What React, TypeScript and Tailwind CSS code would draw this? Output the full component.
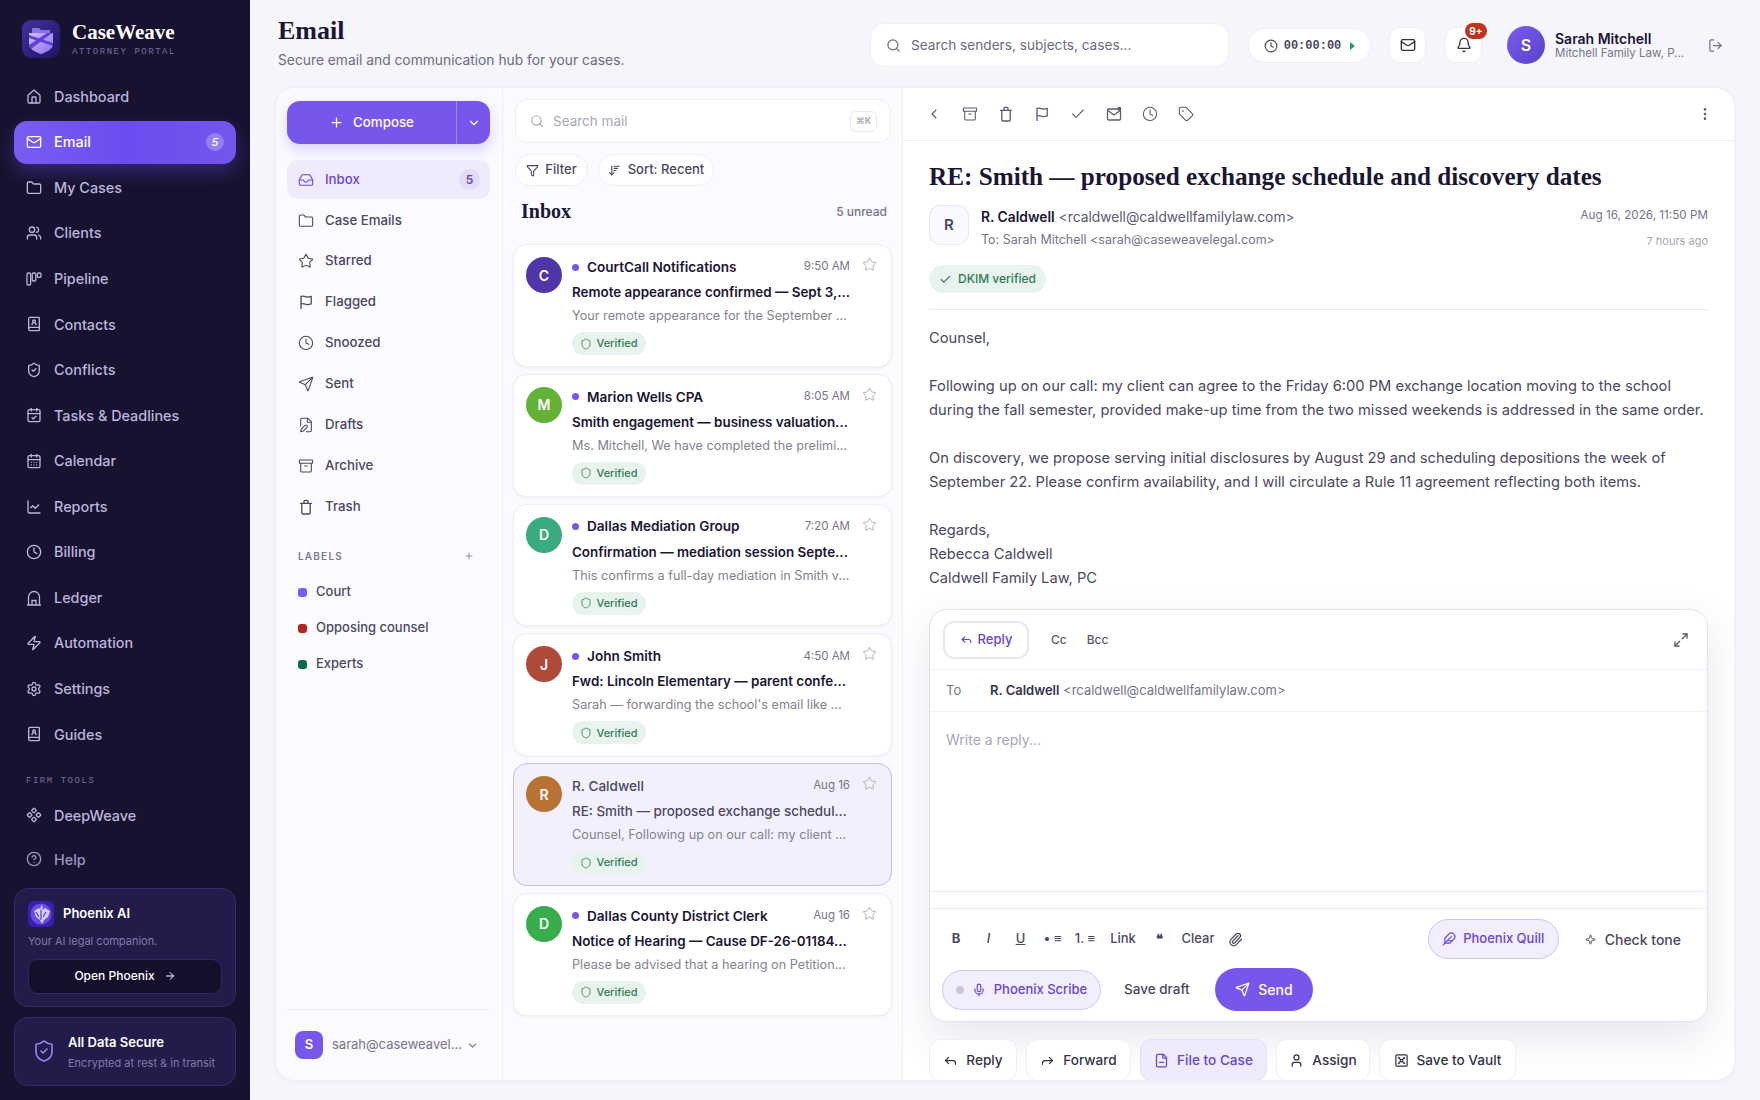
import type { ReactNode } from 'react';
import {
    Archive, ArrowRight, Bell, BookUser, CalendarCheck, CalendarDays, Check, ChartLine, ChevronDown, ChevronLeft,
    CircleHelp, Clock, Component, EllipsisVertical, Feather, FilePen, FileMinus, Filter, Folder, House, Inbox, LogOut, Mail,
    Maximize2, Mic, Paperclip, Plus, Reply, Forward, Search, Send, Settings, Shield, ShieldCheck, Sparkle,
    Star, Tag, User, Users, Zap, ArrowDownWideNarrow, Vault,
} from 'lucide-react';

const Pipeline = () => (
    <svg width="16" height="16" viewBox="0 0 16 16" fill="none" stroke="currentColor" strokeWidth="1.3">
        <rect x="1" y="2" width="3.6" height="12" rx="1.2" />
        <rect x="6.2" y="2" width="3.6" height="8" rx="1.2" />
        <rect x="11.4" y="2" width="3.6" height="4.4" rx="1.2" />
    </svg>
);

const Ledger = () => (
    <svg width="16" height="16" viewBox="0 0 16 16" fill="none" stroke="currentColor" strokeWidth="1.3">
        <path d="M1 15h14M2.500 15V7a5.500 5.500 0 0 1 11 0v8M6 15v-4.500h4V15" />
    </svg>
);

const FlagIcon = ({ size = 16 }: { size?: number }) => (
    <svg width={size} height={size} viewBox="0 0 16 16" fill="none" stroke="currentColor" strokeWidth="1.3" strokeLinejoin="round">
        <path d="M3 15V2.300c2.800-.9 4.200.5 5.800.7 1.500.2 2.900-.2 4.400-.7v7.600c-1.500.5-2.900.9-4.400.7-1.600-.2-3-1.500-5.800-.7" />
    </svg>
);

const TrashIcon = ({ size = 16 }: { size?: number }) => (
    <svg width={size} height={size} viewBox="0 0 16 16" fill="none" stroke="currentColor" strokeWidth="1.3" strokeLinecap="round">
        <path d="M2.500 4.300h11M3.800 4.300V14a1 1 0 0 0 1 1h6.400a1 1 0 0 0 1-1V4.300M6 4.300V2.300a1 1 0 0 1 1-1h2a1 1 0 0 1 1 1v2" />
    </svg>
);

const UnreadMailIcon = () => (
    <svg width="16" height="16" viewBox="0 0 16 16" fill="none" stroke="currentColor" strokeWidth="1.3">
        <rect x="1.500" y="3" width="13" height="11" rx="1.300" />
        <path d="M1.800 4.500 8 9l6.200-4.500" />
        <circle cx="13.300" cy="2.800" r="2" fill="currentColor" stroke="none" />
    </svg>
);

const Logo = () => (
    <svg width="38" height="38" viewBox="0 0 38 38">
        <defs>
            <linearGradient id="lg" x1="0" y1="0" x2="1" y2="1">
                <stop offset="0" stopColor="#43309f" />
                <stop offset="1" stopColor="#1e1462" />
            </linearGradient>
            <linearGradient id="ls" x1="0" y1="0" x2="1" y2="1">
                <stop offset="0" stopColor="#cbbcfa" />
                <stop offset="1" stopColor="#8f6ff0" />
            </linearGradient>
        </defs>
        <rect width="38" height="38" rx="9" fill="url(#lg)" />
        <path d="M10 8h7l2 2h9v6H10z" fill="#8a72e0" />
        <path d="M7 13h24v11c0 5-6 8-12 10-6-2-12-5-12-10z" fill="url(#ls)" />
        <path d="M7 15l24 8v3L7 18zM7 25l18-12h5L9 29z" fill="#6140d2" />
    </svg>
);

const PhoenixLogo = () => (
    <svg width="26" height="26" viewBox="0 0 26 26">
        <rect width="26" height="26" rx="6" fill="#3b1fb0" />
        <circle cx="13" cy="13" r="10.500" fill="#6a4be0" />
        <path d="M13 4c2 1 2 3 1 5l3-2 5 3-2 6-4 3-2 4-2-4-4-3-2-6 5-3 2 2c-1-2-1-4 2-5z" fill="#d8cdfb" />
        <path d="M13 9v10M8 11l3 5M18 11l-3 5" stroke="#5a3bd0" strokeWidth="1.200" />
    </svg>
);

const mainNav: { label: string; icon: ReactNode; badge?: string; active?: boolean }[] = [
    { label: 'Dashboard', icon: <House size={16} /> },
    { label: 'Email', icon: <Mail size={16} />, badge: '5', active: true },
    { label: 'My Cases', icon: <Folder size={16} /> },
    { label: 'Clients', icon: <Users size={16} /> },
    { label: 'Pipeline', icon: <Pipeline /> },
    { label: 'Contacts', icon: <BookUser size={16} /> },
    { label: 'Conflicts', icon: <ShieldCheck size={16} /> },
    { label: 'Tasks & Deadlines', icon: <CalendarCheck size={16} /> },
    { label: 'Calendar', icon: <CalendarDays size={16} /> },
    { label: 'Reports', icon: <ChartLine size={16} /> },
    { label: 'Billing', icon: <Clock size={16} /> },
    { label: 'Ledger', icon: <Ledger /> },
    { label: 'Automation', icon: <Zap size={16} /> },
    { label: 'Settings', icon: <Settings size={16} /> },
    { label: 'Guides', icon: <BookUser size={16} /> },
];

const folders: { label: string; icon: ReactNode }[] = [
    { label: 'Case Emails', icon: <Folder size={16} strokeWidth={1.6} /> },
    { label: 'Starred', icon: <Star size={16} strokeWidth={1.6} /> },
    { label: 'Flagged', icon: <FlagIcon /> },
    { label: 'Snoozed', icon: <Clock size={16} strokeWidth={1.6} /> },
    { label: 'Sent', icon: <Send size={16} strokeWidth={1.6} /> },
    { label: 'Drafts', icon: <FilePen size={16} strokeWidth={1.6} /> },
    { label: 'Archive', icon: <Archive size={16} strokeWidth={1.6} /> },
    { label: 'Trash', icon: <TrashIcon /> },
];

const labels = [
    { name: 'Court', color: 'bg-[#7a5af0]' },
    { name: 'Opposing counsel', color: 'bg-[#b3261e]' },
    { name: 'Experts', color: 'bg-[#0f6b4f]' },
];

const messages = [
    { initial: 'C', color: 'bg-[#4f35a8]', sender: 'CourtCall Notifications', time: '9:50 AM', subject: 'Remote appearance confirmed — Sept 3,...', preview: 'Your remote appearance for the September ...', unread: true },
    { initial: 'M', color: 'bg-[#63b135]', sender: 'Marion Wells CPA', time: '8:05 AM', subject: 'Smith engagement — business valuation...', preview: 'Ms. Mitchell, We have completed the prelimi...', unread: true },
    { initial: 'D', color: 'bg-[#38ab80]', sender: 'Dallas Mediation Group', time: '7:20 AM', subject: 'Confirmation — mediation session Septe...', preview: 'This confirms a full-day mediation in Smith v...', unread: true },
    { initial: 'J', color: 'bg-[#b04a39]', sender: 'John Smith', time: '4:50 AM', subject: 'Fwd: Lincoln Elementary — parent confe...', preview: "Sarah — forwarding the school's email like ...", unread: true },
    { initial: 'R', color: 'bg-[#b87236]', sender: 'R. Caldwell', time: 'Aug 16', subject: 'RE: Smith — proposed exchange schedul...', preview: 'Counsel, Following up on our call: my client ...', unread: false },
    { initial: 'D', color: 'bg-[#38ad4c]', sender: 'Dallas County District Clerk', time: 'Aug 16', subject: 'Notice of Hearing — Cause DF-26-01184...', preview: 'Please be advised that a hearing on Petition...', unread: true },
];

function Sidebar() {
    return (
        <aside className="w-[250px] shrink-0 h-full bg-[#17122f] flex flex-col px-[14px]">
            <div className="flex items-center gap-[12px] pl-[8px] pt-[20px] h-[58px] shrink-0">
                <Logo />
                <div>
                    <div className="font-['Liberation_Serif',serif] font-bold text-[21px] leading-[24px] text-white">CaseWeave</div>
                    <div className="font-['Liberation_Mono',monospace] text-[9px] leading-[12px] mt-[2px] tracking-[0.17em] text-[#786fa3]">ATTORNEY PORTAL</div>
                </div>
            </div>
            <nav className="flex flex-col gap-[2.570px] mt-[17px]">
                {mainNav.map((item) => (
                    <div
                        key={item.label}
                        className={`h-[43px] shrink-0 rounded-[13px] flex items-center gap-[12px] pl-[12px] pr-[12px] text-[14.400px] font-medium ${
                            item.active
                                ? 'bg-gradient-to-r from-[#7a5cf2] via-[#6b4cf0] to-[#7455ec] text-white shadow-[0_8px_18px_rgba(110,80,240,0.35)]'
                                : 'text-[#bdb5de]'
                        }`}
                    >
                        <span className="w-[16px] flex justify-center">{item.icon}</span>
                        <span className="flex-1">{item.label}</span>
                        {item.badge && (
                            <span className="w-[18px] h-[18px] rounded-full bg-white/25 text-[11px] italic flex items-center justify-center">{item.badge}</span>
                        )}
                    </div>
                ))}
            </nav>
            <div className="font-['Liberation_Mono',monospace] text-[9px] leading-[12px] tracking-[0.17em] text-[#786fa3] pl-[12px] mt-[19px]">FIRM TOOLS</div>
            <div className="flex items-center gap-[12px] pl-[12px] h-[43px] mt-[7px] text-[14.400px] font-medium text-[#bdb5de]">
                <Component size={16} />
                <span>DeepWeave</span>
            </div>
            <div className="flex items-center gap-[12px] pl-[12px] h-[43px] mt-[1px] text-[14.400px] font-medium text-[#9d95c2]">
                <CircleHelp size={16} />
                <span>Help</span>
            </div>
            <div className="mt-[7px] h-[119px] shrink-0 rounded-[14px] bg-[#231c4a] border border-[#342b69] px-[13px] pt-[12px]">
                <div className="flex items-center gap-[9px]">
                    <PhoenixLogo />
                    <span className="text-[13px] font-semibold text-white">Phoenix AI</span>
                </div>
                <div className="text-[11px] leading-[14px] text-[#8379ad] mt-[7px]">Your AI legal companion.</div>
                <div className="mt-[11px] h-[35px] rounded-[10px] bg-[#150f2c] border border-[#2f2760] flex items-center justify-center gap-[9px] text-[12px] font-medium text-white">
                    Open Phoenix <ArrowRight size={12} />
                </div>
            </div>
            <div className="mt-[10px] h-[69px] shrink-0 rounded-[14px] bg-[#231c4a] border border-[#342b69] flex items-center pl-[17px] gap-[12px]">
                <ShieldCheck size={24} strokeWidth={1.6} className="text-[#9d86f5]" />
                <div>
                    <div className="text-[13px] font-semibold leading-[18px] text-white">All Data Secure</div>
                    <div className="text-[11px] leading-[14px] mt-[5px] text-[#8379ad]">Encrypted at rest & in transit</div>
                </div>
            </div>
        </aside>
    );
}

function TopBar() {
    return (
        <header className="h-[87px] shrink-0 flex items-start pl-[3px] pt-[23px] pr-[5px]">
            <div className="w-[592px] shrink-0">
                <h1 className="font-['Liberation_Serif',serif] font-bold text-[26px] leading-[16px] text-[#1a1633]">Email</h1>
                <p className="text-[13.800px] leading-[20px] text-[#6d6a80] mt-[11px]">Secure email and communication hub for your cases.</p>
            </div>
            <div className="w-[359px] h-[44px] shrink-0 rounded-[14px] bg-white border border-[#efedf6] flex items-center gap-[10px] pl-[15px] text-[13.650px] text-[#6d6a80]">
                <Search size={15} />
                Search senders, subjects, cases...
            </div>
            <div className="ml-[19px] mt-[5px] w-[123px] h-[35px] rounded-full bg-white border border-[#efedf6] flex items-center justify-center gap-[6px] text-[#4b4860]">
                <Clock size={14} />
                <span className="font-['Liberation_Mono',monospace] text-[12px] font-bold">00:00:00</span>
                <span className="w-0 h-0 border-y-[4px] border-y-transparent border-l-[5px] border-l-[#1e9e6a] ml-[3px]" />
            </div>
            <div className="ml-[18px] mt-[4px] w-[37px] h-[36px] rounded-[11px] bg-white border border-[#efedf6] flex items-center justify-center text-[#35324a]">
                <Mail size={16} />
            </div>
            <div className="relative ml-[19px] mt-[4px] w-[37px] h-[36px] rounded-[11px] bg-white border border-[#efedf6] flex items-center justify-center text-[#35324a]">
                <Bell size={16} />
                <span className="absolute -top-[5px] left-[19px] w-[22px] h-[16px] rounded-full bg-[#c0341d] text-white text-[10px] font-bold flex items-center justify-center">9+</span>
            </div>
            <div className="ml-[25px] mt-[3px] w-[38px] h-[38px] rounded-full bg-gradient-to-br from-[#7b5cf0] to-[#5a40c8] text-white text-[16px] font-semibold flex items-center justify-center">S</div>
            <div className="ml-[10px] mt-[8px] w-[145px]">
                <div className="text-[14px] leading-[15px] font-semibold text-[#1a1633]">Sarah Mitchell</div>
                <div className="text-[11.500px] leading-[14px] text-[#77748a]">Mitchell Family Law, P...</div>
            </div>
            <LogOut size={15} className="ml-[8px] mt-[15px] text-[#77748a]" />
        </header>
    );
}

function FolderColumn() {
    return (
        <div className="w-[227px] shrink-0 border-r border-[#efedf6] bg-[#fbfaff] flex flex-col pl-[11px] pr-[12px] pt-[13px]">
            <div className="flex h-[43px] shrink-0 rounded-[13px] bg-[#7856ec] text-white text-[13.300px] font-medium shadow-[0_6px_14px_rgba(120,86,236,0.25)]">
                <div className="flex-1 flex items-center justify-center gap-[9px] border-r border-white/30">
                    <Plus size={15} /> Compose
                </div>
                <div className="w-[33px] flex items-center justify-center"><ChevronDown size={14} /></div>
            </div>
            <div className="mt-[16px] h-[39px] shrink-0 rounded-[11px] bg-[#efebfc] flex items-center pl-[11px] pr-[10px] gap-[11px] text-[13.250px] font-medium text-[#6a45d0]">
                <Inbox size={16} strokeWidth={1.6} />
                <span className="flex-1">Inbox</span>
                <span className="w-[21px] h-[21px] rounded-full bg-[#e2dcf9] text-[12px] font-semibold flex items-center justify-center">5</span>
            </div>
            <div className="mt-[6px] flex flex-col gap-[9.900px]">
                {folders.map((f) => (
                    <div key={f.label} className="h-[31px] flex items-center pl-[11px] gap-[11px] text-[13.250px] font-medium text-[#4b4860]">
                        {f.icon}
                        {f.label}
                    </div>
                ))}
            </div>
            <div className="mt-[27px] flex items-center justify-between pl-[11px] pr-[16px] text-[10px] leading-[14px] font-semibold tracking-[0.12em] text-[#7d7a90]">
                LABELS <Plus size={10} />
            </div>
            <div className="mt-[16px] flex flex-col gap-[10px]">
                {labels.map((l) => (
                    <div key={l.name} className="h-[26px] flex items-center pl-[11px] gap-[9px] text-[13px] font-medium text-[#4b4860]">
                        <span className={`w-[9px] h-[9px] rounded-[3px] ${l.color}`} />
                        {l.name}
                    </div>
                ))}
            </div>
            <div className="mt-auto border-t border-[#ecebf3] h-[71px] shrink-0 flex items-center pl-[8px] gap-[9px] text-[13px] text-[#77748a]">
                <span className="w-[28px] h-[28px] rounded-[8px] bg-[#7856ec] text-white text-[13px] font-semibold flex items-center justify-center">S</span>
                <span className="w-[125px]">sarah@caseweavel...</span>
                <ChevronDown size={13} />
            </div>
        </div>
    );
}

function MessageCard({ m }: { m: (typeof messages)[number] }) {
    return (
        <div className={`h-[122.750px] shrink-0 rounded-[14px] border flex pl-[12px] pt-[12px] ${
            m.unread ? 'bg-white border-[#efedf6] shadow-[0_1px_3px_rgba(60,50,120,0.07)]' : 'bg-[#f3f0fd] border-[#c5baf0]'
        }`}>
            <div className={`w-[36px] h-[36px] rounded-full ${m.color} text-white text-[14px] font-semibold flex items-center justify-center shrink-0`}>{m.initial}</div>
            <div className="ml-[10px] w-[278px]">
                <div className="flex items-center h-[20px]">
                    {m.unread && <span className="w-[7px] h-[7px] rounded-full bg-[#7856ec] mr-[8px] shrink-0" />}
                    <span className={`flex-1 text-[13.600px] ${m.unread ? 'font-semibold text-[#1a1633]' : 'font-medium text-[#4b4860]'}`}>{m.sender}</span>
                    <span className="text-[11.500px] text-[#77748a]">{m.time}</span>
                </div>
                <div className={`mt-[5px] text-[13.400px] leading-[20px] whitespace-nowrap ${m.unread ? 'font-semibold text-[#1a1633]' : 'font-medium text-[#4b4860]'}`}>{m.subject}</div>
                <div className="mt-[5px] text-[12.700px] leading-[18px] whitespace-nowrap text-[#85828f]">{m.preview}</div>
                <div className="mt-[7px] w-[74px] h-[23px] rounded-full bg-[#e9f3ee] flex items-center justify-center gap-[4px] text-[11px] font-medium text-[#2f7a55]">
                    <Shield size={12} strokeWidth={1.6} /> Verified
                </div>
            </div>
            <Star size={15} strokeWidth={1.4} className="ml-[12px] text-[#a8a5b8] shrink-0" />
        </div>
    );
}

function ListColumn() {
    return (
        <div className="w-[400px] shrink-0 border-r border-[#efedf6] bg-[#fbfaff] flex flex-col pl-[10px] pr-[10px] pt-[11px]">
            <div className="ml-[2px] mr-[1px] h-[44px] shrink-0 rounded-[13px] bg-white border border-[#efedf6] flex items-center pl-[14px] pr-[13px] gap-[9px] text-[13.500px] text-[#a8a5b8]">
                <Search size={14} />
                <span className="flex-1">Search mail</span>
                <span className="w-[27px] h-[21px] rounded-[6px] border border-[#e8e6f0] text-[9px] font-semibold flex items-center justify-center">⌘K</span>
            </div>
            <div className="ml-[2px] mt-[11px] flex gap-[10px] text-[13px] font-medium text-[#4b4860]">
                <div className="h-[32px] w-[73px] rounded-full bg-white border border-[#efedf6] flex items-center justify-center gap-[6px]"><Filter size={13} />Filter</div>
                <div className="h-[32px] w-[116px] rounded-full bg-white border border-[#efedf6] flex items-center justify-center gap-[7px]"><ArrowDownWideNarrow size={13} />Sort: Recent</div>
            </div>
            <div className="ml-[8px] mr-[5px] mt-[13px] flex items-center justify-between">
                <span className="font-['Liberation_Serif',serif] font-bold text-[20px] leading-[24px] text-[#1a1633]">Inbox</span>
                <span className="text-[12px] font-medium text-[#77748a] mt-[2px]">5 unread</span>
            </div>
            <div className="mt-[21px] flex flex-col gap-[7px]">
                {messages.map((m, i) => <MessageCard key={i} m={m} />)}
            </div>
        </div>
    );
}

function ReplyBox() {
    return (
        <div className="mt-[19px] h-[413px] rounded-[18px] border border-[#e3e1ec] bg-white flex flex-col shadow-[0_16px_40px_rgba(60,50,120,0.12)]">
            <div className="h-[60px] shrink-0 border-b border-[#f0eff5] flex items-center pl-[13px] pr-[18px] text-[12px] font-medium text-[#5c596f]">
                <div className="h-[38px] w-[86px] rounded-[11px] border-2 border-[#e9e6f4] flex items-center justify-center gap-[5px] text-[13px] font-medium text-[#6a45d0]">
                    <Reply size={13} /> Reply
                </div>
                <span className="ml-[22px]">Cc</span>
                <span className="ml-[20px] flex-1">Bcc</span>
                <Maximize2 size={16} />
            </div>
            <div className="h-[42px] shrink-0 border-b border-[#f0eff5] flex items-center pl-[16px] text-[13px] text-[#77748a]">
                <span className="w-[44px]">To</span>
                <span className="font-semibold text-[#35324a]">R. Caldwell</span>&nbsp;&lt;rcaldwell@caldwellfamilylaw.com&gt;
            </div>
            <div className="h-[180px] shrink-0 border-b border-[#ecebf3] pl-[16px] pt-[18px] text-[14px] leading-[20px] text-[#a8a5b8]">Write a reply...</div>
            <div className="h-[17px] shrink-0 border-b border-[#ecebf3]" />
            <div className="mt-[10px] h-[40px] shrink-0 flex items-center text-[13px] text-[#4b4860] pl-[10px] pr-[26px]">
                <div className="flex-1 flex items-center font-medium text-center">
                    <span className="w-[32px] font-bold">B</span>
                    <span className="w-[33px] italic">I</span>
                    <span className="w-[31px] underline">U</span>
                    <span className="w-[33px]">• ≡</span>
                    <span className="w-[32px]">1. ≡</span>
                    <span className="w-[44px]">Link</span>
                    <span className="w-[28px] font-bold">❝</span>
                    <span className="w-[50px]">Clear</span>
                    <span className="w-[24px] flex justify-center"><Paperclip size={15} /></span>
                </div>
                <div className="w-[131px] h-[40px] rounded-full bg-[#f2eefd] border border-[#cfc5f3] flex items-center justify-center gap-[7px] font-medium text-[#6a45d0]">
                    <Feather size={14} /> Phoenix Quill
                </div>
                <div className="ml-[26px] flex items-center gap-[9px] text-[14px] font-medium text-[#4b4860]">
                    <Sparkle size={11} /> Check tone
                </div>
            </div>
            <div className="mt-[9px] flex items-center pl-[12px]">
                <div className="w-[159px] h-[40px] rounded-full bg-[#f2eefd] border border-[#cfc5f3] flex items-center justify-center gap-[8px] text-[13px] font-medium text-[#6a45d0]">
                    <span className="w-[8px] h-[8px] rounded-full bg-[#c9c4d8]" />
                    <Mic size={14} /> Phoenix Scribe
                </div>
                <span className="ml-[23px] w-[91px] text-[13.500px] font-medium text-[#4b4860]">Save draft</span>
                <div className="w-[98px] h-[43px] rounded-full bg-[#7856ec] text-white text-[14px] font-medium flex items-center justify-center gap-[8px]">
                    <Send size={15} /> Send
                </div>
            </div>
        </div>
    );
}

const actions: { label: string; width: string; icon: ReactNode; active?: boolean }[] = [
    { label: 'Reply', width: 'w-[88px]', icon: <Reply size={15} /> },
    { label: 'Forward', width: 'w-[105px]', icon: <Forward size={15} /> },
    { label: 'File to Case', width: 'w-[127px]', icon: <FileMinus size={15} />, active: true },
    { label: 'Assign', width: 'w-[94px]', icon: <User size={15} /> },
    { label: 'Save to Vault', width: 'w-[137px]', icon: <Vault size={15} /> },
];

function Reader() {
    return (
        <div className="flex-1 min-w-0 bg-white flex flex-col">
            <div className="h-[53px] shrink-0 border-b border-[#efedf6] flex items-center pl-[23px] pr-[21px] text-[#5c596f]">
                <div className="flex-1 flex items-center gap-[20px]">
                    <ChevronLeft size={16} strokeWidth={1.6} />
                    <Archive size={16} strokeWidth={1.6} />
                    <TrashIcon />
                    <FlagIcon />
                    <Check size={16} strokeWidth={1.6} />
                    <UnreadMailIcon />
                    <Clock size={16} strokeWidth={1.6} />
                    <Tag size={16} strokeWidth={1.6} />
                </div>
                <EllipsisVertical size={16} />
            </div>
            <div className="flex-1 min-h-0 pl-[26px] pr-[26px] overflow-hidden">
                <h2 className="font-['Liberation_Serif',serif] font-bold text-[25.200px] leading-[30px] text-[#1a1633] mt-[21px]">RE: Smith — proposed exchange schedule and discovery dates</h2>
                <div className="mt-[13px] flex">
                    <div className="w-[40px] h-[40px] rounded-[11px] border border-[#e8e6f0] bg-[#faf9fd] flex items-center justify-center text-[15px] font-semibold text-[#4b4860]">R</div>
                    <div className="ml-[12px] flex-1 pt-[2px]">
                        <div className="text-[13.800px] leading-[20px] text-[#5c596f]"><span className="font-semibold text-[#1a1633]">R. Caldwell</span> &lt;rcaldwell@caldwellfamilylaw.com&gt;</div>
                        <div className="text-[12.500px] leading-[18px] mt-[4px] text-[#77748a]">To: Sarah Mitchell &lt;sarah@caseweavelegal.com&gt;</div>
                    </div>
                    <div className="text-right">
                        <div className="text-[11.700px] leading-[20px] text-[#77748a]">Aug 16, 2026, 11:50 PM</div>
                        <div className="text-[11px] leading-[16px] mt-[8px] text-[#a8a5b8]">7 hours ago</div>
                    </div>
                </div>
                <div className="mt-[16px] w-[117px] h-[28px] rounded-full bg-[#e9f3ee] flex items-center justify-center gap-[6px] text-[12px] font-medium text-[#2f7a55]">
                    <Check size={13} /> DKIM verified
                </div>
                <div className="mt-[16px] border-t border-[#ecebf3]" />
                <div className="mt-[16px] text-[14.700px] leading-[24px] text-[#4b4860] whitespace-nowrap">
                    <p>Counsel,</p>
                    <p className="mt-[24px]">Following up on our call: my client can agree to the Friday 6:00 PM exchange location moving to the school<br />during the fall semester, provided make-up time from the two missed weekends is addressed in the same order.</p>
                    <p className="mt-[24px]">On discovery, we propose serving initial disclosures by August 29 and scheduling depositions the week of<br />September 22. Please confirm availability, and I will circulate a Rule 11 agreement reflecting both items.</p>
                    <p className="mt-[24px]">Regards,</p>
                    <p>Rebecca Caldwell</p>
                    <p>Caldwell Family Law, PC</p>
                </div>
                <ReplyBox />
                <div className="mt-[17px] flex gap-[9px]">
                    {actions.map((a) => (
                        <div key={a.label} className={`${a.width} h-[42px] shrink-0 rounded-[11px] border flex items-center justify-center gap-[8px] text-[13.600px] font-medium ${
                            a.active ? 'bg-[#efebfc] border-[#e3def5] text-[#6a45d0]' : 'bg-white border-[#efedf6] text-[#35324a]'
                        }`}>
                            {a.icon}
                            {a.label}
                        </div>
                    ))}
                </div>
            </div>
        </div>
    );
}

export default function App() {
    return (
        <div className="w-[1760px] h-[1100px] flex overflow-hidden bg-[#f6f5fc] font-['Inter',sans-serif]">
            <Sidebar />
            <main className="flex-1 min-w-0 flex flex-col pl-[25px] pr-[25px] pb-[19px]">
                <TopBar />
                <div className="flex-1 min-h-0 flex rounded-[20px] border border-[#efedf6] overflow-hidden shadow-[0_1px_4px_rgba(60,50,120,0.05)]">
                    <FolderColumn />
                    <ListColumn />
                    <Reader />
                </div>
            </main>
        </div>
    );
}
